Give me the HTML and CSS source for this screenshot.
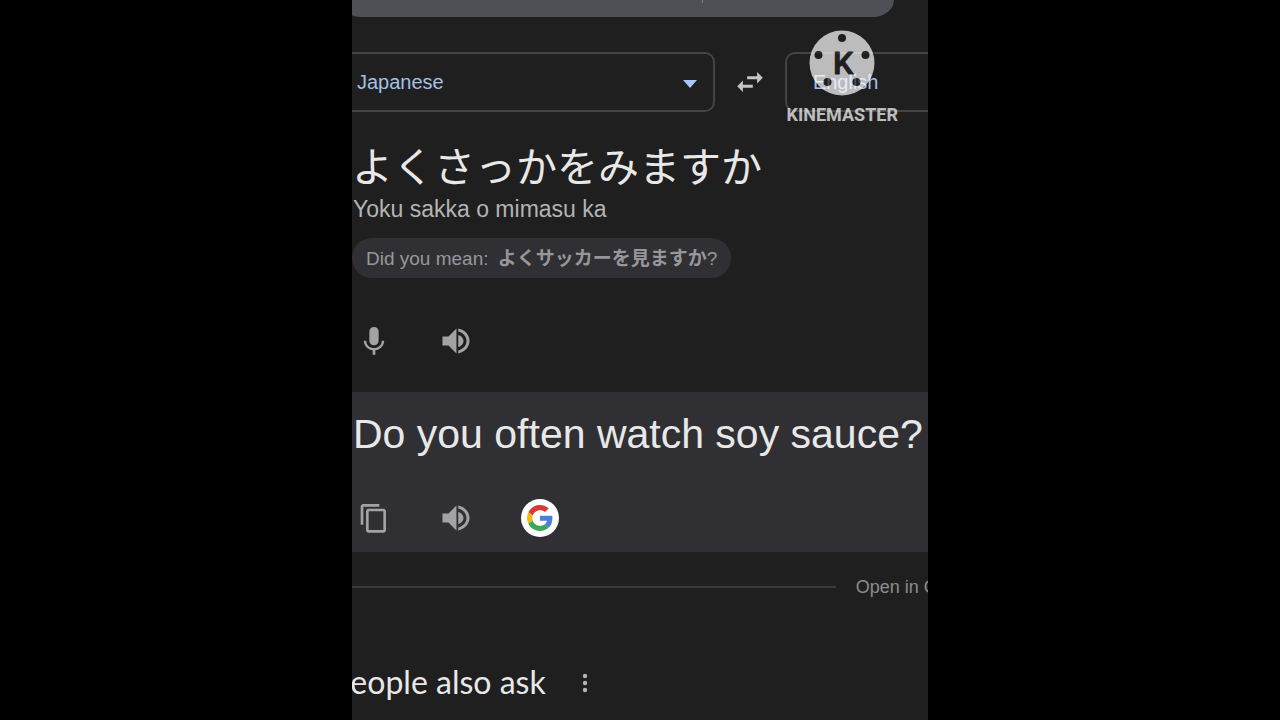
FILE: index.html
```html
<!DOCTYPE html>
<html lang="en">
<head>
  <meta charset="utf-8">
  <meta name="viewport" content="width=device-width, initial-scale=1.0">
  <title>Translate</title>
  <link rel="stylesheet" href="styles.css">
</head>
<body>
  <main class="screen">
    <div class="search-bar"><span class="search-divider"></span></div>

    <div class="languages">
      <div class="language language-from">
        <select aria-label="Source language">
          <option>Japanese</option>
          <option>English</option>
        </select>
        <svg class="arrow" viewBox="0 0 14 8" aria-hidden="true"><path d="M0 0h14L7 8z"/></svg>
      </div>
      <button class="swap-button" aria-label="Swap languages">
        <svg class="icon icon-swap" viewBox="0 0 24 24"><path d="M6.99 11L3 15l3.99 4v-3H14v-2H6.99v-3zM21 9l-3.99-4v3H10v2h7.01v3L21 9z"/></svg>
      </button>
      <div class="language language-to">
        <select aria-label="Target language">
          <option>English</option>
          <option>Japanese</option>
        </select>
      </div>
    </div>

    <section class="source">
      <p class="source-text" lang="ja">よくさっかをみますか</p>
      <p class="romaji">Yoku sakka o mimasu ka</p>
      <button class="suggestion">Did you mean: <span class="suggestion-text" lang="ja">よくサッカーを見ますか</span>?</button>
      <div class="actions">
        <button aria-label="Speak">
          <svg class="icon" viewBox="0 0 24 24"><path d="M12 14.8c1.8 0 3.1-1.3 3.1-3V5.700c0-1.700-1.300-3-3.100-3s-3.100 1.300-3.100 3v6.100c0 1.700 1.300 3 3.100 3zm5.200-3c0 2.900-2.500 4.900-5.200 4.900s-5.200-2-5.200-4.900H5.200c0 3.300 2.600 6 5.900 6.400v3h1.800v-3c3.300-.4 5.900-3.100 5.900-6.400z"/></svg>
        </button>
        <button aria-label="Listen">
          <svg class="icon" viewBox="0 0 24 24"><path d="M3 9v6h4l5.300 5.300V3.700L7 9zM13.500 8v8c2-.5 3.500-2 3.500-4s-1.500-3.500-3.500-4zM13.500 3.700v2c3.200.8 5.500 3.300 5.500 6.300s-2.300 5.500-5.500 6.300v2c4.300-.8 7.500-4.200 7.500-8.300s-3.200-7.500-7.500-8.300z"/></svg>
        </button>
      </div>
    </section>

    <section class="result">
      <p class="result-text">Do you often watch soy sauce?</p>
      <div class="actions">
        <button aria-label="Copy">
          <svg class="icon icon-copy" viewBox="0 0 24 24"><path d="M16 1.500H4c-1.100 0-2 .9-2 2V17h2V3.500h12zM19 5H8c-1.100 0-2 .9-2 2v14c0 1.100.9 2 2 2h11c1.100 0 2-.9 2-2V7c0-1.100-.9-2-2-2zm0 16H8V7h11z"/></svg>
        </button>
        <button aria-label="Listen to translation">
          <svg class="icon" viewBox="0 0 24 24"><path d="M3 9v6h4l5.300 5.300V3.700L7 9zM13.500 8v8c2-.5 3.500-2 3.500-4s-1.500-3.500-3.500-4zM13.500 3.700v2c3.200.8 5.500 3.300 5.500 6.300s-2.300 5.500-5.500 6.300v2c4.300-.8 7.500-4.200 7.500-8.300s-3.200-7.500-7.500-8.300z"/></svg>
        </button>
        <button class="google-button" aria-label="Search with Google">
          <svg class="google-logo" viewBox="0 0 48 48">
            <path fill="#d93a35" d="M24 9.500c3.540 0 6.710 1.220 9.210 3.600l6.850-6.850C35.900 2.380 30.470 0 24 0 14.620 0 6.510 5.380 2.560 13.220l7.980 6.190C12.430 13.720 17.740 9.500 24 9.500z"/>
            <path fill="#4a7fe0" d="M46.980 24.550c0-1.570-.15-3.090-.38-4.550H24v9.020h12.940c-.58 2.960-2.260 5.480-4.780 7.180l7.730 6c4.510-4.180 7.090-10.360 7.090-17.650z"/>
            <path fill="#f2b90f" d="M10.530 28.590A14.500 14.500 0 0 1 9.770 24c0-1.600.27-3.140.76-4.590l-7.980-6.190A23.900 23.900 0 0 0 0 24c0 3.880.92 7.540 2.560 10.780l7.970-6.190z"/>
            <path fill="#3ba757" d="M24 48c6.480 0 11.930-2.130 15.890-5.810l-7.730-6c-2.150 1.450-4.920 2.300-8.160 2.300-6.260 0-11.570-4.220-13.470-9.910l-7.980 6.190C6.510 42.620 14.620 48 24 48z"/>
          </svg>
        </button>
      </div>
    </section>

    <div class="open-in">
      <a href="#">Open in Google Translate</a>
    </div>

    <div class="questions">
      <h2>People also ask</h2>
      <button aria-label="More options">
        <svg class="icon icon-more" viewBox="0 0 28 28"><circle cx="14" cy="7" r="2.200"/><circle cx="14" cy="14" r="2.200"/><circle cx="14" cy="21" r="2.200"/></svg>
      </button>
    </div>

    <!-- video editor watermark -->
    <div class="watermark">
      <svg class="watermark-logo" viewBox="0 0 66 66" aria-hidden="true">
        <circle cx="33" cy="33" r="32.500" fill="#fff"/>
        <circle cx="33" cy="8" r="4"/>
        <circle cx="9.500" cy="25" r="4"/>
        <circle cx="56.500" cy="25" r="4"/>
        <circle cx="18.500" cy="52" r="4"/>
        <circle cx="47.500" cy="52" r="4"/>
        <text class="watermark-letter" x="34" y="44" text-anchor="middle">K</text>
      </svg>
      <span>KINEMASTER</span>
    </div>
  </main>
</body>
</html>
```
FILE: styles.css
```css
* {
  box-sizing: border-box;
}

body {
  margin: 0;
  background-color: #000;
  font-family: "Liberation Sans", Arial, "Noto Sans CJK JP", sans-serif;
  color: #e8e8e8;
}

p,
h2 {
  margin: 0;
}

button {
  padding: 0;
  border: none;
  background: none;
  color: inherit;
  font-family: inherit;
  cursor: pointer;
}

.screen {
  position: relative;
  width: 45%;
  min-height: 100vh;
  margin: 0 auto;
  overflow: hidden;
  background-color: #1f1f1f;
}

.search-bar {
  display: flex;
  height: 17px;
  margin: 0 34px 0 -12px;
  padding-left: 362px;
  border-radius: 0 0 40px 40px / 0 0 32px 32px;
  background-color: #4d5156;
}

.search-divider {
  width: 1px;
  height: 3px;
  background-color: #777b80;
}

.languages {
  display: flex;
  margin-top: 35px;
}

.language {
  position: relative;
}

.language-from {
  width: 63%;
}

.language-to {
  flex: 1;
}

.language select {
  display: block;
  width: 100%;
  height: 60px;
  padding: 0 5px;
  border: 2px solid #434445;
  border-radius: 10px;
  background: none;
  color: #a5bfe8;
  font-family: inherit;
  font-size: 20px;
  appearance: none;
}

.language-from select {
  border-left: none;
  border-radius: 0 10px 10px 0;
}

.language-to select {
  padding-left: 26px;
  border-right: none;
  border-radius: 10px 0 0 10px;
}

.arrow {
  position: absolute;
  top: 28px;
  right: 18px;
  width: 14px;
  height: 8px;
  fill: #a8c7fa;
  pointer-events: none;
}

.swap-button {
  width: 70px;
  color: #c4c4c4;
}

.icon {
  display: block;
  width: 36px;
  height: 36px;
  margin: auto;
  fill: currentColor;
}

.icon-swap {
  width: 34px;
  height: 34px;
}

.source {
  padding-top: 28px;
}

.source-text {
  font-family: "Noto Sans CJK JP", sans-serif;
  font-size: 41px;
  line-height: 48px;
  white-space: nowrap;
}

.romaji {
  margin-top: 7px;
  padding-left: 1px;
  color: #b4b4b4;
  font-size: 23px;
  line-height: 28px;
}

.suggestion {
  height: 40px;
  margin-top: 15px;
  padding: 0 14px 3px;
  border-radius: 20px;
  background-color: #303034;
  color: #97979b;
  font-size: 19px;
  white-space: nowrap;
}

.suggestion-text {
  margin-left: 4px;
  font-family: "Noto Sans CJK JP", sans-serif;
  font-weight: bold;
}

.actions {
  display: flex;
  align-items: center;
  gap: 38px;
  color: #a3a3a5;
}

.actions button {
  width: 44px;
  height: 44px;
}

.source .actions {
  padding: 41px 0 29px;
}

.result {
  padding: 16px 0 12px;
  background-color: #303034;
}

.result-text {
  padding-left: 1px;
  font-size: 41px;
  line-height: 52px;
  white-space: nowrap;
}

.result .actions {
  padding-top: 36px;
}

.icon-copy {
  width: 32px;
  height: 32px;
}

.actions .google-button {
  display: flex;
  align-items: center;
  justify-content: center;
  width: 38px;
  height: 38px;
  margin-left: 5px;
  border-radius: 50%;
  background-color: #fff;
}

.google-logo {
  width: 26px;
  height: 26px;
}

.open-in {
  display: flex;
  align-items: center;
  gap: 20px;
  margin-top: 24px;
}

.open-in::before {
  content: "";
  flex: 0 0 84%;
  height: 2px;
  background-color: #383939;
}

.open-in a {
  color: #8c8c8c;
  font-size: 18px;
  line-height: 22px;
  text-decoration: none;
  white-space: nowrap;
}

.questions {
  display: flex;
  align-items: center;
  gap: 25px;
  height: 60px;
  margin: 55px 0 7px -20px;
}

.questions h2 {
  padding-bottom: 3px;
  font-family: Lato, sans-serif;
  font-size: 32px;
  font-weight: normal;
}

.questions button {
  color: #b4b4b4;
}

.icon-more {
  width: 28px;
  height: 28px;
}

.watermark {
  position: absolute;
  top: 30px;
  right: 30px;
  display: flex;
  flex-direction: column;
  align-items: center;
  gap: 8px;
  color: #fff;
  font-family: Roboto, sans-serif;
  font-size: 18px;
  font-weight: bold;
  line-height: 22px;
  opacity: 0.7;
}

.watermark-logo {
  width: 66px;
  height: 66px;
  fill: #1f1f1f;
}

.watermark-letter {
  font-size: 32px;
  font-weight: 500;
  stroke: #1f1f1f;
  stroke-width: 1px;
  stroke-linejoin: round;
}
```
